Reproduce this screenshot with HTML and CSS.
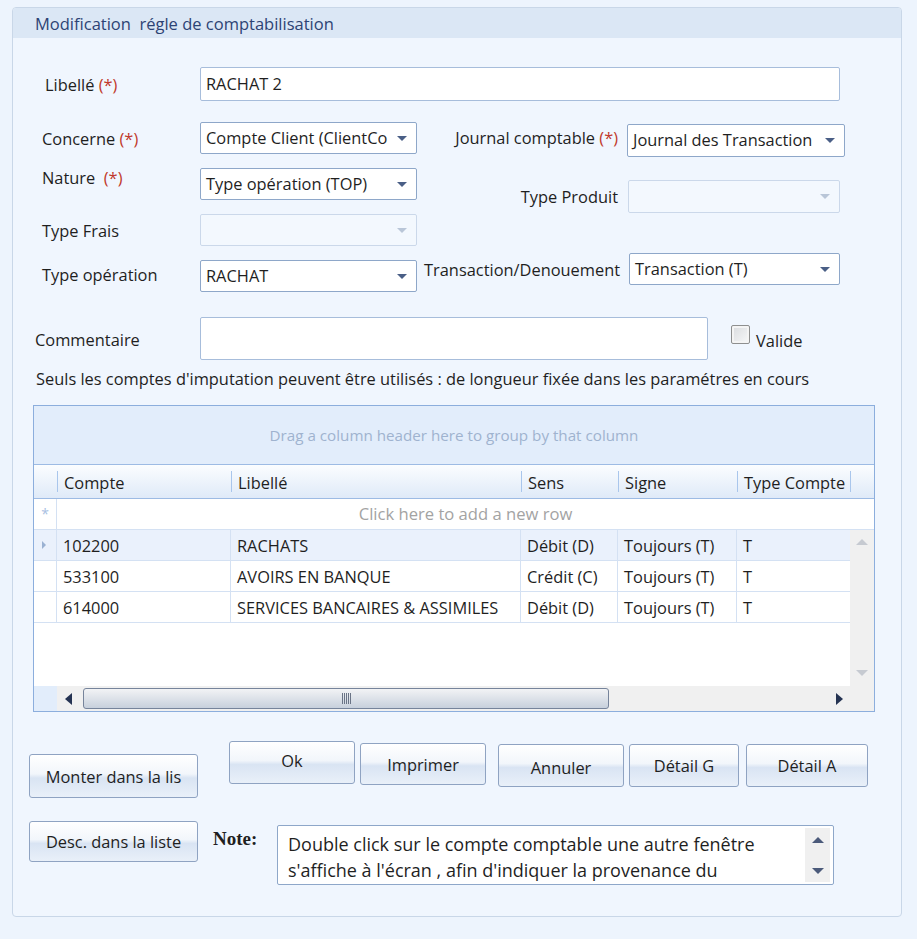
FILE: index.html
```html
<!DOCTYPE html>
<html lang="fr">
<head>
    <meta charset="UTF-8">
    <title>Modification règle de comptabilisation</title>
    <link rel="stylesheet" href="styles.css">
</head>
<body>
<div class="panel">
    <div class="panel-title">Modification&nbsp; régle de comptabilisation</div>

    <div class="row row-libelle">
        <label class="lbl lbl-libelle">Libellé <span class="req">(*)</span></label>
        <div class="field input w-libelle">RACHAT 2</div>
    </div>

    <div class="cols">
        <div class="col-left">
            <div class="row">
                <label class="lbl">Concerne <span class="req">(*)</span></label>
                <div class="field select">Compte Client (ClientCo<span class="arrow"></span></div>
            </div>
            <div class="row">
                <label class="lbl lbl-up">Nature <span class="req">&nbsp;(*)</span></label>
                <div class="field select">Type opération (TOP)<span class="arrow"></span></div>
            </div>
            <div class="row">
                <label class="lbl">Type Frais</label>
                <div class="field select disabled"><span class="arrow"></span></div>
            </div>
            <div class="row">
                <label class="lbl lbl-op">Type opération</label>
                <div class="field select">RACHAT<span class="arrow"></span></div>
            </div>
        </div>
        <div class="col-right">
            <div class="row">
                <label class="lbl-r lbl-up2">Journal comptable <span class="req">(*)</span></label>
                <div class="field select w-journal">Journal des Transaction<span class="arrow"></span></div>
            </div>
            <div class="row row-produit">
                <label class="lbl-r">Type Produit</label>
                <div class="field select disabled w-produit"><span class="arrow"></span></div>
            </div>
            <div class="row row-transac">
                <label class="lbl-r">Transaction/Denouement</label>
                <div class="field select w-transac">Transaction (T)<span class="arrow"></span></div>
            </div>
        </div>
    </div>

    <div class="row row-comment">
        <label class="lbl lbl-comment">Commentaire</label>
        <div class="field input w-comment"></div>
        <span class="checkbox"></span>
        <span class="check-label">Valide</span>
    </div>

    <p class="info">Seuls les comptes d'imputation peuvent être utilisés : de longueur fixée dans les paramétres en cours</p>

    <div class="grid">
        <div class="group-panel">Drag a column header here to group by that column</div>
        <div class="grid-head">
            <div class="hcell"></div>
            <div class="hcell">Compte</div>
            <div class="hcell">Libellé</div>
            <div class="hcell">Sens</div>
            <div class="hcell">Signe</div>
            <div class="hcell">Type Compte</div>
            <div class="hcell hcell-end"></div>
        </div>
        <div class="new-row">
            <div class="ind ind-new">*</div>
            <div class="new-row-text">Click here to add a new row</div>
        </div>
        <div class="grid-body">
            <div class="rows">
                <div class="grow selected">
                    <div class="ind"><span class="ind-arrow"></span></div>
                    <div class="cell">102200</div>
                    <div class="cell">RACHATS</div>
                    <div class="cell">Débit (D)</div>
                    <div class="cell">Toujours (T)</div>
                    <div class="cell">T</div>
                </div>
                <div class="grow">
                    <div class="ind"></div>
                    <div class="cell">533100</div>
                    <div class="cell">AVOIRS EN BANQUE</div>
                    <div class="cell">Crédit (C)</div>
                    <div class="cell">Toujours (T)</div>
                    <div class="cell">T</div>
                </div>
                <div class="grow">
                    <div class="ind"></div>
                    <div class="cell">614000</div>
                    <div class="cell">SERVICES BANCAIRES &amp; ASSIMILES</div>
                    <div class="cell">Débit (D)</div>
                    <div class="cell">Toujours (T)</div>
                    <div class="cell">T</div>
                </div>
            </div>
            <div class="vscroll">
                <span class="tri-up light"></span>
                <span class="tri-down light"></span>
            </div>
        </div>
        <div class="hscroll">
            <div class="corner"></div>
            <div class="htrack">
                <span class="tri-left"></span>
                <div class="thumb"><span class="grip"></span></div>
                <span class="tri-right"></span>
            </div>
        </div>
    </div>

    <div class="btn-row">
        <button class="btn btn-side btn-monter">Monter dans la lis</button>
        <button class="btn btn-ok">Ok</button>
        <button class="btn btn-imprimer">Imprimer</button>
        <button class="btn btn-annuler">Annuler</button>
        <button class="btn btn-detg">Détail G</button>
        <button class="btn btn-deta">Détail A</button>
    </div>

    <div class="btn-row2">
        <button class="btn btn-side btn-desc">Desc. dans la liste</button>
        <span class="note-label">Note:</span>
        <div class="note-box">
            <div class="note-text">Double click sur le compte comptable une autre fenêtre s'affiche à l'écran , afin d'indiquer la provenance du</div>
            <div class="note-scroll">
                <span class="tri-up"></span>
                <span class="tri-down"></span>
            </div>
        </div>
    </div>
</div>
</body>
</html>
```

FILE: styles.css
```css
body {
    margin: 0;
    background-color: #edf4fd;
    font-family: "Open Sans", "Noto Sans", sans-serif;
    font-size: 16.4px;
    color: #1f1f1f;
}
.panel {
    box-sizing: border-box;
    width: 890px;
    height: 910px;
    margin: 7px 0 0 12px;
    border: 1px solid #c9d7e8;
    border-radius: 4px;
    background-color: #f0f6fe;
    overflow: hidden;
}
.panel-title {
    height: 30px;
    line-height: 31px;
    padding-left: 22px;
    background-color: #dbe7f5;
    color: #2d4374;
    font-size: 16.5px;
}
.row {
    display: flex;
    align-items: center;
}
.row-libelle {
    margin-top: 29px;
}
.lbl {
    box-sizing: border-box;
    width: 187px;
    padding-left: 29px;
    white-space: nowrap;
}
.lbl-libelle {
    padding-left: 32px;
}
.lbl-up {
    align-self: flex-start;
    line-height: 20px;
}
.lbl-op {
    margin-top: -3px;
}
.req {
    color: #c0392b;
}
.field {
    box-sizing: border-box;
    position: relative;
    height: 32px;
    line-height: 30px;
    padding-left: 5px;
    border: 1px solid #8ea7c9;
    border-radius: 2px;
    background-color: #fff;
    white-space: nowrap;
    overflow: hidden;
}
.input {
    border-color: #a7bddb;
}
.w-libelle {
    width: 640px;
    height: 34px;
    line-height: 32px;
}
.select {
    width: 217px;
}
.arrow {
    position: absolute;
    right: 9px;
    top: 13px;
    border-left: 5px solid transparent;
    border-right: 5px solid transparent;
    border-top: 5px solid #4a5f86;
}
.disabled {
    border-color: #cbd8ea;
    background-color: #f3f8fe;
}
.disabled .arrow {
    border-top-color: #b9c6d8;
}
.cols {
    display: flex;
    align-items: flex-start;
    margin-top: 21px;
}
.col-left {
    width: 411px;
    display: flex;
    flex-direction: column;
    gap: 14px;
}
.col-right {
    display: flex;
    flex-direction: column;
    margin-top: 2px;
}
.lbl-r {
    width: 194px;
    margin-right: 9px;
    text-align: right;
    white-space: nowrap;
}
.lbl-up2 {
    margin-top: -6px;
}
.w-journal {
    width: 218px;
    height: 33px;
}
.w-produit {
    width: 212px;
    height: 33px;
    margin-left: 1px;
}
.w-transac {
    width: 211px;
    margin-left: 2px;
}
.row-produit {
    margin-top: 23px;
}
.row-transac {
    margin-top: 40px;
}
.row-comment {
    margin-top: 25px;
}
.lbl-comment {
    padding-left: 22px;
    margin-top: 2px;
}
.w-comment {
    width: 508px;
    height: 43px;
}
.checkbox {
    box-sizing: border-box;
    width: 19px;
    height: 19px;
    margin: 8px 6px 0 23px;
    align-self: flex-start;
    border: 1px solid #8e8f8f;
    border-radius: 2px;
    background: linear-gradient(135deg, #d9dbde, #f7f8f9);
    box-shadow: inset 0 0 0 2px #f4f4f4;
}
.check-label {
    margin-top: 4px;
}
.info {
    margin: 8px 0 0 23px;
    line-height: 22px;
    white-space: nowrap;
}
.grid {
    box-sizing: border-box;
    display: flex;
    flex-direction: column;
    width: 842px;
    height: 307px;
    margin: 15px 0 0 20px;
    border: 1px solid #8caedd;
    background-color: #fff;
}
.group-panel {
    height: 58px;
    line-height: 58px;
    text-align: center;
    background-color: #e2edfb;
    border-bottom: 1px solid #9dbbe4;
    color: #9fb3cf;
    font-size: 15.2px;
}
.grid-head {
    display: grid;
    grid-template-columns: 23px 174px 290px 97px 119px 113px 1fr;
    height: 33px;
    background: linear-gradient(#fbfdff, #dfeaf8);
    border-bottom: 1px solid #9dbbe4;
}
.hcell {
    line-height: 35px;
    padding-left: 7px;
    white-space: nowrap;
    overflow: hidden;
    background: linear-gradient(#a9c6ec, #a9c6ec) left 6px / 1px 21px no-repeat;
}
.hcell:first-child {
    background: none;
}
.new-row {
    display: grid;
    grid-template-columns: 23px 1fr;
    height: 30px;
    border-bottom: 1px solid #d4e1f3;
}
.ind {
    border-right: 1px solid #d4e1f3;
    position: relative;
}
.ind-new {
    color: #a8c0e2;
    text-align: center;
    line-height: 30px;
    font-size: 14px;
}
.new-row-text {
    text-align: center;
    line-height: 30px;
    color: #a3a3a3;
    font-size: 16.6px;
}
.grid-body {
    flex: 1;
    display: flex;
}
.rows {
    flex: 1;
}
.grow {
    display: grid;
    grid-template-columns: 23px 174px 290px 97px 119px 1fr;
    height: 30px;
    border-bottom: 1px solid #d4e1f3;
}
.grow.selected {
    background-color: #eaf1fc;
}
.cell {
    line-height: 31px;
    padding-left: 6px;
    border-right: 1px solid #d4e1f3;
    white-space: nowrap;
    overflow: hidden;
}
.cell:last-child {
    border-right: none;
}
.ind-arrow {
    position: absolute;
    left: 8px;
    top: 11px;
    border-top: 4px solid transparent;
    border-bottom: 4px solid transparent;
    border-left: 4px solid #9ab1d2;
}
.vscroll {
    width: 24px;
    background-color: #f0f0f0;
    display: flex;
    flex-direction: column;
    justify-content: space-between;
    align-items: center;
    padding: 9px 0 10px;
}
.tri-up {
    border-left: 6px solid transparent;
    border-right: 6px solid transparent;
    border-bottom: 6px solid #4b5a7a;
}
.tri-down {
    border-left: 6px solid transparent;
    border-right: 6px solid transparent;
    border-top: 6px solid #4b5a7a;
}
.tri-up.light {
    border-bottom-color: #c6cad1;
}
.tri-down.light {
    border-top-color: #c6cad1;
}
.hscroll {
    display: flex;
    height: 25px;
}
.corner {
    width: 23px;
    background-color: #e2edfb;
}
.htrack {
    flex: 1;
    display: flex;
    align-items: center;
    background-color: #f0f0f0;
    padding: 0 31px 0 8px;
}
.tri-left {
    border-top: 6px solid transparent;
    border-bottom: 6px solid transparent;
    border-right: 7px solid #253352;
    margin-right: 11px;
}
.tri-right {
    margin-left: auto;
    border-top: 6px solid transparent;
    border-bottom: 6px solid transparent;
    border-left: 7px solid #253352;
}
.thumb {
    box-sizing: border-box;
    width: 526px;
    height: 21px;
    border: 1px solid #76849b;
    border-radius: 3px;
    background: linear-gradient(#f2f3f5, #dde2e9 50%, #c7d0dc);
    display: flex;
    justify-content: center;
    align-items: center;
}
.grip {
    width: 9px;
    height: 11px;
    background: repeating-linear-gradient(90deg, #6a7486 0 1px, transparent 1px 2px);
}
.btn {
    box-sizing: border-box;
    font-family: inherit;
    font-size: 16.4px;
    color: #1f1f1f;
    border: 1px solid #8fa3c2;
    border-radius: 3px;
    background: linear-gradient(#ffffff, #f2f6fb 45%, #d9e4f3 55%, #e9f0f9);
    padding: 0;
}
.btn-row {
    display: flex;
    align-items: flex-start;
    margin-top: 29px;
}
.btn-side {
    width: 169px;
    margin-left: 16px;
}
.btn-monter {
    height: 44px;
    margin-top: 13px;
}
.btn-ok {
    width: 126px;
    height: 43px;
    margin-left: 31px;
    padding-bottom: 4px;
}
.btn-imprimer {
    width: 126px;
    height: 42px;
    margin: 2px 0 0 5px;
}
.btn-annuler {
    width: 126px;
    height: 43px;
    margin: 3px 0 0 12px;
    padding-top: 3px;
}
.btn-detg {
    width: 110px;
    height: 43px;
    margin: 3px 0 0 5px;
}
.btn-deta {
    width: 122px;
    height: 43px;
    margin: 3px 0 0 7px;
}
.btn-row2 {
    display: flex;
    align-items: flex-start;
    margin-top: 23px;
}
.btn-desc {
    height: 41px;
}
.note-label {
    width: 64px;
    margin: 7px 0 0 15px;
    font-family: "Liberation Serif", serif;
    font-weight: bold;
    font-size: 19px;
}
.note-box {
    box-sizing: border-box;
    display: flex;
    width: 557px;
    height: 60px;
    margin-top: 4px;
    border: 1px solid #8ea7c9;
    border-radius: 2px;
    background-color: #fff;
}
.note-text {
    flex: 1;
    padding: 5px 8px 0 10px;
    line-height: 26px;
    font-size: 18px;
    overflow: hidden;
}
.note-scroll {
    flex: none;
    width: 25px;
    margin: 2px 3px 2px 0;
    background-color: #f0f0f0;
    display: flex;
    flex-direction: column;
    justify-content: space-between;
    align-items: center;
    padding: 9px 0 8px;
    box-sizing: border-box;
}
```
